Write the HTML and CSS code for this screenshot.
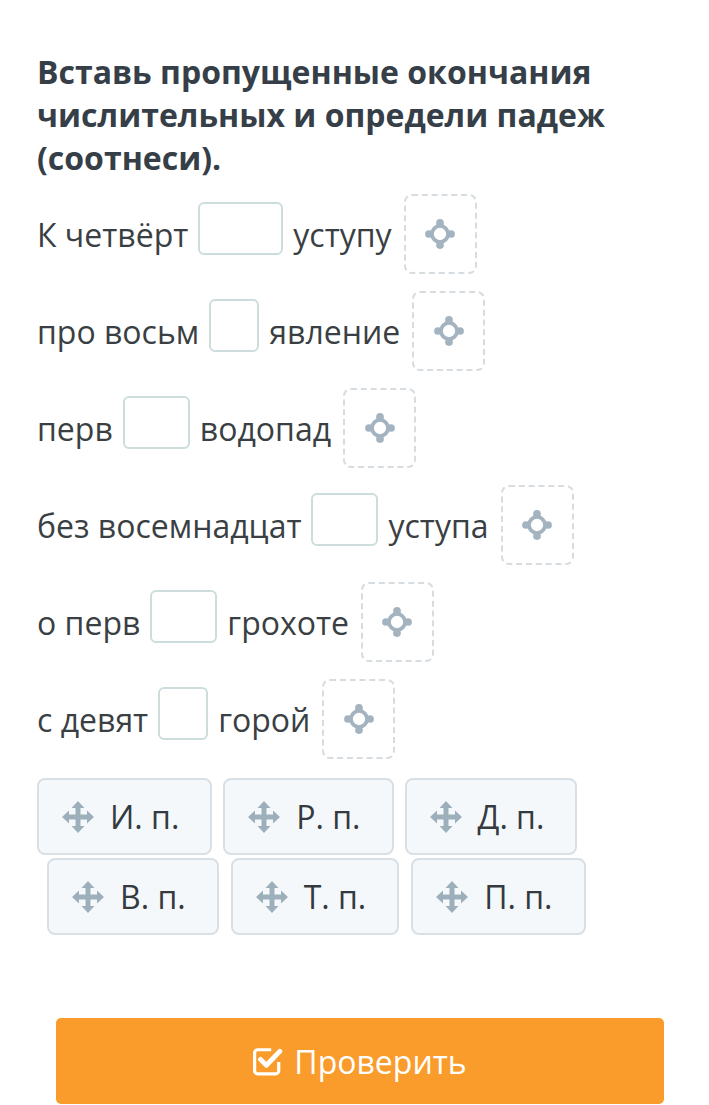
FILE: index.html
```html
<!DOCTYPE html>
<html lang="ru">
<head>
  <meta charset="UTF-8">
  <title>Падежи числительных</title>
  <link rel="stylesheet" href="styles.css">
</head>
<body>
  <div class="task">
    <h1 class="task-title">Вставь пропущенные окончания числительных и определи падеж (соотнеси).</h1>

    <div class="lines">
      <div class="line">
        <span>К четвёрт</span><span class="gap w-lg"></span><span>уступу</span>
        <span class="drop"><svg class="target" viewBox="0 0 28 28"><circle cx="14" cy="14" r="7.5"/><circle class="dot" cx="14" cy="3.7" r="3.6"/><circle class="dot" cx="14" cy="24.3" r="3.6"/><circle class="dot" cx="3.7" cy="14" r="3.6"/><circle class="dot" cx="24.3" cy="14" r="3.6"/></svg></span>
      </div>
      <div class="line">
        <span>про восьм</span><span class="gap w-sm"></span><span>явление</span>
        <span class="drop"><svg class="target" viewBox="0 0 28 28"><circle cx="14" cy="14" r="7.5"/><circle class="dot" cx="14" cy="3.7" r="3.6"/><circle class="dot" cx="14" cy="24.3" r="3.6"/><circle class="dot" cx="3.7" cy="14" r="3.6"/><circle class="dot" cx="24.3" cy="14" r="3.6"/></svg></span>
      </div>
      <div class="line">
        <span>перв</span><span class="gap w-md"></span><span>водопад</span>
        <span class="drop"><svg class="target" viewBox="0 0 28 28"><circle cx="14" cy="14" r="7.5"/><circle class="dot" cx="14" cy="3.7" r="3.6"/><circle class="dot" cx="14" cy="24.3" r="3.6"/><circle class="dot" cx="3.7" cy="14" r="3.6"/><circle class="dot" cx="24.3" cy="14" r="3.6"/></svg></span>
      </div>
      <div class="line">
        <span>без восемнадцат</span><span class="gap w-md"></span><span>уступа</span>
        <span class="drop"><svg class="target" viewBox="0 0 28 28"><circle cx="14" cy="14" r="7.5"/><circle class="dot" cx="14" cy="3.7" r="3.6"/><circle class="dot" cx="14" cy="24.3" r="3.6"/><circle class="dot" cx="3.7" cy="14" r="3.6"/><circle class="dot" cx="24.3" cy="14" r="3.6"/></svg></span>
      </div>
      <div class="line">
        <span>о перв</span><span class="gap w-md"></span><span>грохоте</span>
        <span class="drop"><svg class="target" viewBox="0 0 28 28"><circle cx="14" cy="14" r="7.5"/><circle class="dot" cx="14" cy="3.7" r="3.6"/><circle class="dot" cx="14" cy="24.3" r="3.6"/><circle class="dot" cx="3.7" cy="14" r="3.6"/><circle class="dot" cx="24.3" cy="14" r="3.6"/></svg></span>
      </div>
      <div class="line">
        <span>с девят</span><span class="gap w-sm"></span><span>горой</span>
        <span class="drop"><svg class="target" viewBox="0 0 28 28"><circle cx="14" cy="14" r="7.5"/><circle class="dot" cx="14" cy="3.7" r="3.6"/><circle class="dot" cx="14" cy="24.3" r="3.6"/><circle class="dot" cx="3.7" cy="14" r="3.6"/><circle class="dot" cx="24.3" cy="14" r="3.6"/></svg></span>
      </div>
    </div>

    <div class="chips">
      <div class="chip-row">
        <div class="chip"><svg class="move" viewBox="0 0 34 34"><path d="M17 1 L23.5 8 H19.5 V14.5 H26 V10.5 L33 17 L26 23.5 V19.5 H19.5 V26 H23.5 L17 33 L10.5 26 H14.5 V19.5 H8 V23.5 L1 17 L8 10.5 V14.5 H14.5 V8 H10.5 Z"/></svg>И. п.</div>
        <div class="chip"><svg class="move" viewBox="0 0 34 34"><path d="M17 1 L23.5 8 H19.5 V14.5 H26 V10.5 L33 17 L26 23.5 V19.5 H19.5 V26 H23.5 L17 33 L10.5 26 H14.5 V19.5 H8 V23.5 L1 17 L8 10.5 V14.5 H14.5 V8 H10.5 Z"/></svg>Р. п.</div>
        <div class="chip"><svg class="move" viewBox="0 0 34 34"><path d="M17 1 L23.5 8 H19.5 V14.5 H26 V10.5 L33 17 L26 23.5 V19.5 H19.5 V26 H23.5 L17 33 L10.5 26 H14.5 V19.5 H8 V23.5 L1 17 L8 10.5 V14.5 H14.5 V8 H10.5 Z"/></svg>Д. п.</div>
      </div>
      <div class="chip-row shifted">
        <div class="chip"><svg class="move" viewBox="0 0 34 34"><path d="M17 1 L23.5 8 H19.5 V14.5 H26 V10.5 L33 17 L26 23.5 V19.5 H19.5 V26 H23.5 L17 33 L10.5 26 H14.5 V19.5 H8 V23.5 L1 17 L8 10.5 V14.5 H14.5 V8 H10.5 Z"/></svg>В. п.</div>
        <div class="chip"><svg class="move" viewBox="0 0 34 34"><path d="M17 1 L23.5 8 H19.5 V14.5 H26 V10.5 L33 17 L26 23.5 V19.5 H19.5 V26 H23.5 L17 33 L10.5 26 H14.5 V19.5 H8 V23.5 L1 17 L8 10.5 V14.5 H14.5 V8 H10.5 Z"/></svg>Т. п.</div>
        <div class="chip"><svg class="move" viewBox="0 0 34 34"><path d="M17 1 L23.5 8 H19.5 V14.5 H26 V10.5 L33 17 L26 23.5 V19.5 H19.5 V26 H23.5 L17 33 L10.5 26 H14.5 V19.5 H8 V23.5 L1 17 L8 10.5 V14.5 H14.5 V8 H10.5 Z"/></svg>П. п.</div>
      </div>
    </div>

    <button class="check-btn" type="button">
      <svg class="check-icon" viewBox="0 0 28 28"><path class="box" d="M24 15 V23 a3 3 0 0 1 -3 3 H4.5 a3 3 0 0 1 -3 -3 V6.5 a3 3 0 0 1 3 -3 H17"/><path class="tick" d="M7 12.5 L12.5 18 L25 5"/></svg>
      Проверить
    </button>
  </div>
</body>
</html>
```

FILE: styles.css
```css
body {
  margin: 0;
  background-color: #fff;
  font-family: "Open Sans", "Noto Sans", sans-serif;
  color: #343a40;
}
.task {
  padding: 50px 37px 0 37px;
}
.task-title {
  margin: 0;
  font-size: 32px;
  line-height: 43px;
  font-weight: 700;
  color: #363f48;
}
.lines {
  margin-top: 15px;
  display: flex;
  flex-direction: column;
  gap: 17px;
}
.line {
  display: flex;
  align-items: center;
  gap: 10px;
  height: 80px;
  font-size: 32px;
  color: #3a3f44;
}
.gap {
  align-self: flex-start;
  margin-top: 8px;
  height: 53px;
  box-sizing: border-box;
  border: 2px solid #cddcdc;
  border-radius: 6px;
  background: #fff;
}
.w-lg { width: 85px; }
.w-md { width: 67px; }
.w-sm { width: 50px; }
.drop {
  margin-left: 2px;
  width: 73px;
  height: 80px;
  box-sizing: border-box;
  border: 2px dashed #d6dce0;
  border-radius: 8px;
  display: flex;
  align-items: center;
  justify-content: center;
}
.target {
  width: 30px;
  height: 30px;
}
.target circle {
  fill: none;
  stroke: #a3b3c0;
  stroke-width: 3.5;
}
.target .dot {
  fill: #a3b3c0;
  stroke: none;
}
.chips {
  margin-top: 19px;
  display: flex;
  flex-direction: column;
  gap: 3px;
}
.chip-row {
  display: flex;
  gap: 11px;
}
.chip-row.shifted {
  margin-left: 10px;
  gap: 12px;
}
.chip {
  height: 77px;
  box-sizing: border-box;
  padding: 0 31px 0 22px;
  border: 2px solid #d8e0e5;
  border-radius: 8px;
  background: #f4f8fb;
  display: flex;
  align-items: center;
  gap: 15px;
  font-size: 32px;
  color: #343a40;
}
.move {
  width: 34px;
  height: 34px;
  fill: #9eafbc;
}
.check-btn {
  margin: 83px 0 0 19px;
  width: 608px;
  height: 86px;
  border: none;
  border-radius: 5px;
  background: #fa9c2c;
  color: #fff;
  font-family: "Open Sans", "Noto Sans", sans-serif;
  font-size: 32px;
  display: flex;
  align-items: center;
  justify-content: center;
  gap: 11px;
  padding: 0;
}
.check-icon {
  width: 30px;
  height: 30px;
  fill: none;
  stroke: #fff;
}
.check-icon .box {
  stroke-width: 3;
}
.check-icon .tick {
  stroke-width: 4.5;
  stroke-linecap: round;
  stroke-linejoin: round;
}
```
